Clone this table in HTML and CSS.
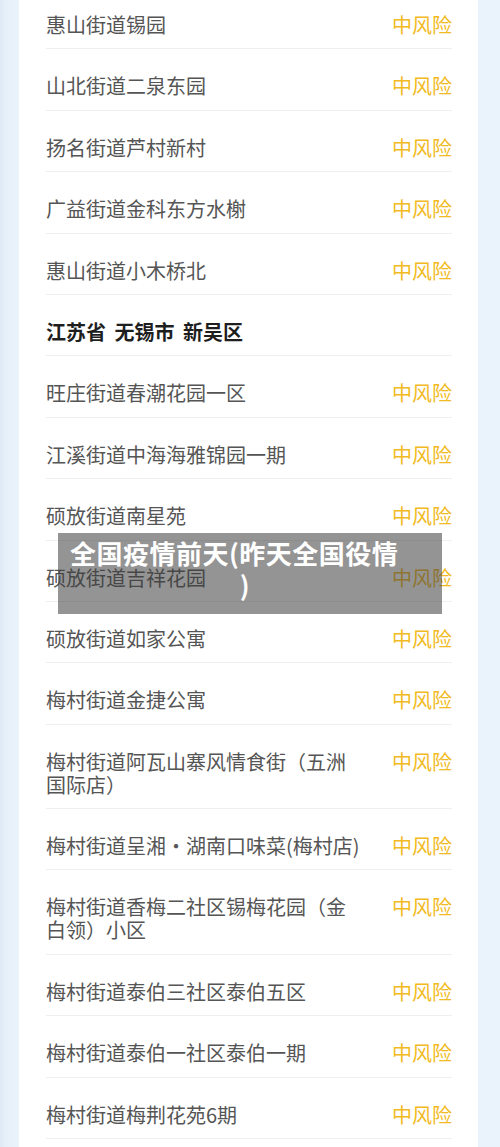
FILE: index.html
```html
<!DOCTYPE html>
<html lang="zh-CN">
<head>
  <meta charset="UTF-8">
  <meta name="viewport" content="width=device-width, initial-scale=1.0">
  <title>全国疫情前天(昨天全国役情)</title>
  <link rel="stylesheet" href="styles.css">
</head>
<body>
  <div class="page">
    <div class="card">
      <ul class="list">
        <li class="row"><span class="name">惠山街道锡园</span><span class="risk">中风险</span></li>
        <li class="row"><span class="name">山北街道二泉东园</span><span class="risk">中风险</span></li>
        <li class="row"><span class="name">扬名街道芦村新村</span><span class="risk">中风险</span></li>
        <li class="row"><span class="name">广益街道金科东方水榭</span><span class="risk">中风险</span></li>
        <li class="row"><span class="name">惠山街道小木桥北</span><span class="risk">中风险</span></li>
        <li class="row area">江苏省 无锡市 新吴区</li>
        <li class="row"><span class="name">旺庄街道春潮花园一区</span><span class="risk">中风险</span></li>
        <li class="row"><span class="name">江溪街道中海海雅锦园一期</span><span class="risk">中风险</span></li>
        <li class="row"><span class="name">硕放街道南星苑</span><span class="risk">中风险</span></li>
        <li class="row"><span class="name">硕放街道吉祥花园</span><span class="risk">中风险</span></li>
        <li class="row"><span class="name">硕放街道如家公寓</span><span class="risk">中风险</span></li>
        <li class="row"><span class="name">梅村街道金捷公寓</span><span class="risk">中风险</span></li>
        <li class="row"><span class="name">梅村街道阿瓦山寨风情食街（五洲国际店）</span><span class="risk">中风险</span></li>
        <li class="row"><span class="name nowrap">梅村街道呈湘·湖南口味菜(梅村店)</span><span class="risk">中风险</span></li>
        <li class="row"><span class="name">梅村街道香梅二社区锡梅花园（金白领）小区</span><span class="risk">中风险</span></li>
        <li class="row"><span class="name">梅村街道泰伯三社区泰伯五区</span><span class="risk">中风险</span></li>
        <li class="row"><span class="name">梅村街道泰伯一社区泰伯一期</span><span class="risk">中风险</span></li>
        <li class="row"><span class="name">梅村街道梅荆花苑6期</span><span class="risk">中风险</span></li>
      </ul>
    </div>
  </div>

  <div class="caption">
    全国疫情前天(昨天全国役情<span class="tail">)</span>
  </div>
</body>
</html>
```

FILE: styles.css
```css
* {
  margin: 0;
  padding: 0;
  box-sizing: border-box;
}

body {
  font-family: "Noto Sans CJK SC", "Noto Sans", sans-serif;
  background: #eaf3fb;
  height: 1147px;
  overflow: hidden;
  position: relative;
}

.page {
  display: flex;
  height: 100%;
  background: linear-gradient(to right, #dde9f4 0, #e6f0f9 6px, #eaf3fb 18px);
  padding: 0 22px 0 19px;
}

.card {
  flex: 1;
  background: #fff;
}

.list {
  list-style: none;
  margin-top: -12px;
  padding: 0 26px 0 27px;
}

.row {
  display: flex;
  justify-content: space-between;
  align-items: flex-start;
  padding: 25px 0 12.4px;
  border-bottom: 1px solid #efefef;
  font-size: 20px;
  line-height: 23px;
}

.name {
  width: 318px;
  color: #555;
}

.nowrap {
  white-space: nowrap;
}

.risk {
  color: #f2ba22;
  white-space: nowrap;
}

.area {
  color: #1e1e1e;
  font-weight: 700;
  word-spacing: 4px;
}

.caption {
  position: absolute;
  top: 533px;
  left: 58px;
  width: 384px;
  height: 81px;
  padding: 4px 22px 13px 12px;
  background: rgba(60, 60, 60, 0.55);
  color: #fff;
  font-size: 26px;
  font-weight: 700;
  line-height: 32px;
  letter-spacing: 0.5px;
}

.tail {
  display: block;
  text-align: center;
}
```
